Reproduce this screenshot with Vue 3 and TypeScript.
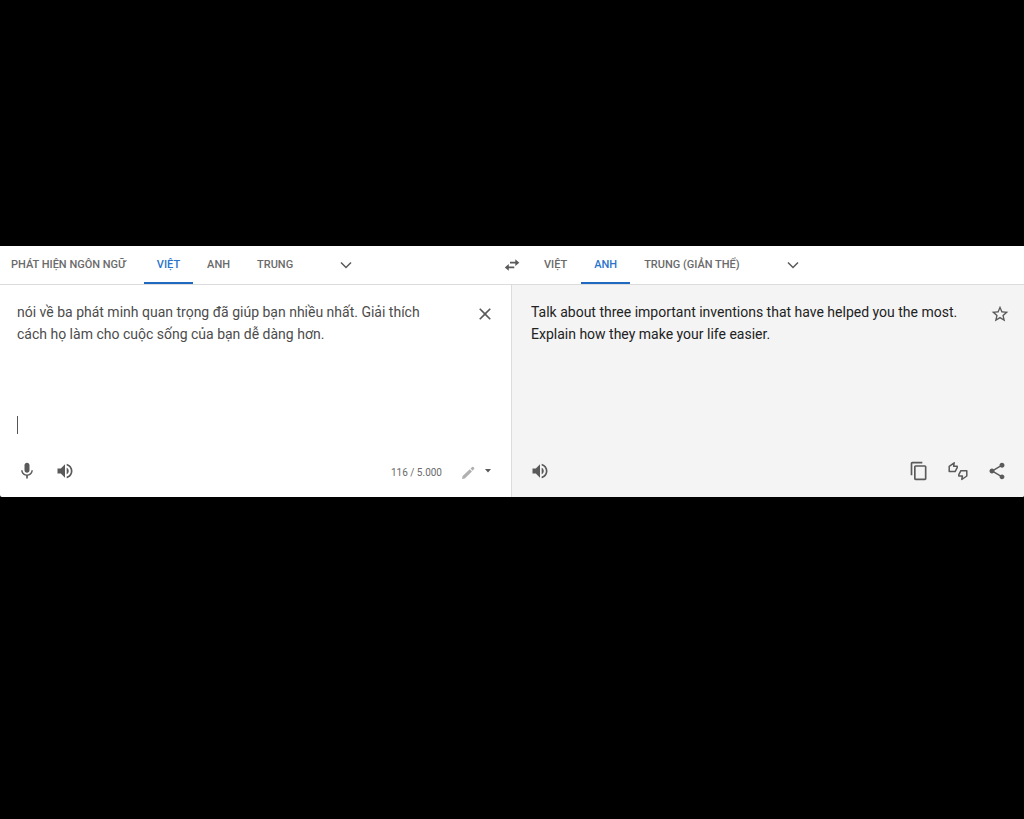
<script setup lang="ts">
import { ref } from 'vue'

interface Tab {
  label: string
  value: string
}

const sourceTabs: Tab[] = [
  { label: 'PHÁT HIỆN NGÔN NGỮ', value: 'auto' },
  { label: 'VIỆT', value: 'vi' },
  { label: 'ANH', value: 'en' },
  { label: 'TRUNG', value: 'zh' },
]
const targetTabs: Tab[] = [
  { label: 'VIỆT', value: 'vi' },
  { label: 'ANH', value: 'en' },
  { label: 'TRUNG (GIẢN THỂ)', value: 'zh-CN' },
]

const source = ref('vi')
const target = ref('en')
const text = ref(
  'nói về ba phát minh quan trọng đã giúp bạn nhiều nhất. Giải thích cách họ làm cho cuộc sống của bạn dễ dàng hơn.',
)
const translation =
  'Talk about three important inventions that have helped you the most. Explain how they make your life easier.'
</script>

<template>
  <main class="page">
    <section class="translator">
      <header class="languages">
        <nav class="tabs source-tabs">
          <button
            v-for="tab in sourceTabs"
            :key="tab.value"
            type="button"
            class="tab"
            :class="{ active: tab.value === source }"
            @click="source = tab.value"
          >{{ tab.label }}</button>
          <button type="button" class="icon-button more" aria-label="Ngôn ngữ khác">
            <svg class="chevron" viewBox="0 0 12 12"><path d="M1 3.500l5 5 5-5" /></svg>
          </button>
        </nav>
        <button type="button" class="icon-button swap" aria-label="Hoán đổi ngôn ngữ">
          <svg viewBox="0 0 20 20" class="icon">
            <path d="M8 6.800h5.300V4.300L17.300 7.700l-4 3.400V8.600H8zM12.300 11.500H6.800V9L2.800 12.400l4 3.400v-2.500h5.500z" />
          </svg>
        </button>
        <nav class="tabs">
          <button
            v-for="tab in targetTabs"
            :key="tab.value"
            type="button"
            class="tab"
            :class="{ active: tab.value === target }"
            @click="target = tab.value"
          >{{ tab.label }}</button>
          <button type="button" class="icon-button more" aria-label="Ngôn ngữ khác">
            <svg class="chevron" viewBox="0 0 12 12"><path d="M1 3.500l5 5 5-5" /></svg>
          </button>
        </nav>
      </header>

      <div class="panes">
        <div class="pane source">
          <div class="content">
            <div class="entry">
              <textarea v-model="text" class="text" aria-label="Văn bản gốc" spellcheck="false"></textarea>
              <span class="caret"></span>
            </div>
            <button type="button" class="icon-button" aria-label="Xóa" @click="text = ''">
              <svg viewBox="0 0 24 24" class="icon">
                <path d="M19 6.400L17.600 5 12 10.600 6.400 5 5 6.400l5.600 5.600L5 17.600 6.400 19l5.600-5.600 5.600 5.600 1.400-1.400-5.600-5.600z" />
              </svg>
            </button>
          </div>
          <footer class="actions">
            <button type="button" class="icon-button" aria-label="Nói">
              <svg viewBox="0 0 24 24" class="icon">
                <path d="M12 14c1.700 0 3-1.300 3-3V5c0-1.700-1.300-3-3-3S9 3.300 9 5v6c0 1.700 1.300 3 3 3zM17.300 11c0 3-2.500 5.100-5.300 5.100S6.700 14 6.700 11H5c0 3.400 2.700 6.200 6 6.700V21h2v-3.300c3.300-.5 6-3.300 6-6.700z" />
              </svg>
            </button>
            <button type="button" class="icon-button" aria-label="Nghe">
              <svg viewBox="0 0 24 24" class="icon">
                <path d="M3 9v6h4l5 5V4L7 9zM16.500 12c0-1.800-1-3.300-2.500-4v8c1.500-.7 2.500-2.200 2.500-4zM14 3.200v2.100c2.900.9 5 3.500 5 6.700s-2.100 5.800-5 6.700v2.100c4-.9 7-4.500 7-8.800s-3-7.900-7-8.800z" />
              </svg>
            </button>
            <span class="counter">116 / 5.000</span>
            <button type="button" class="keyboard" aria-label="Công cụ nhập">
              <svg viewBox="0 0 14 14" class="pencil">
                <path d="M1 13l.6-3L8.800 3.300l2.200 2.300L3.800 12.400zM9.500 2.600L11.200 1q.6-.5 1.200 0l.7.8q.5.6 0 1.200l-1.500 1.800z" />
              </svg>
              <svg viewBox="0 0 6 4" class="triangle"><path d="M0 0h6L3 3.500z" /></svg>
            </button>
          </footer>
        </div>

        <div class="pane result">
          <div class="content">
            <p class="text">{{ translation }}</p>
            <button type="button" class="icon-button" aria-label="Lưu bản dịch">
              <svg viewBox="0 0 24 24" class="icon">
                <path d="M22 9.240l-7.190-.62L12 2 9.190 8.630 2 9.240l5.460 4.730L5.820 21 12 17.270 18.180 21l-1.630-7.030L22 9.240zM12 15.400l-3.760 2.270 1-4.280-3.320-2.880 4.380-.38L12 6.100l1.710 4.040 4.380.38-3.320 2.880 1 4.280L12 15.400z" />
              </svg>
            </button>
          </div>
          <footer class="actions">
            <button type="button" class="icon-button listen" aria-label="Nghe bản dịch">
              <svg viewBox="0 0 24 24" class="icon">
                <path d="M3 9v6h4l5 5V4L7 9zM16.500 12c0-1.800-1-3.300-2.500-4v8c1.500-.7 2.500-2.200 2.500-4zM14 3.200v2.100c2.900.9 5 3.500 5 6.700s-2.100 5.800-5 6.700v2.100c4-.9 7-4.500 7-8.800s-3-7.900-7-8.800z" />
              </svg>
            </button>
            <button type="button" class="icon-button" aria-label="Sao chép">
              <svg viewBox="0 0 24 24" class="icon">
                <path d="M16 1H4c-1.100 0-2 .9-2 2v14h2V3h12V1zm3 4H8c-1.100 0-2 .9-2 2v14c0 1.100.9 2 2 2h11c1.100 0 2-.9 2-2V7c0-1.100-.9-2-2-2zm0 16H8V7h11v14z" />
              </svg>
            </button>
            <button type="button" class="icon-button" aria-label="Đánh giá">
              <svg viewBox="0 0 20 20" class="icon rate">
                <path d="M1.200 5.300v5.300h5.900l2.100-3.900V5.300H5.600l.6-3.500z" />
                <path d="M18.800 15V9.700h-5.900l-2.100 3.900V15h3.600l-.6 3.500z" />
              </svg>
            </button>
            <button type="button" class="icon-button" aria-label="Chia sẻ">
              <svg viewBox="0 0 24 24" class="icon">
                <path d="M18 16.080c-.76 0-1.440.3-1.960.77L8.910 12.700c.05-.23.09-.46.09-.7s-.04-.47-.09-.7l7.050-4.110c.54.5 1.250.81 2.040.81 1.660 0 3-1.340 3-3s-1.340-3-3-3-3 1.340-3 3c0 .24.04.47.09.7L8.040 9.810C7.500 9.310 6.790 9 6 9c-1.660 0-3 1.340-3 3s1.340 3 3 3c.79 0 1.500-.31 2.040-.81l7.120 4.160c-.05.21-.08.43-.08.65 0 1.610 1.310 2.920 2.920 2.920s2.920-1.310 2.920-2.920-1.310-2.920-2.920-2.920z" />
              </svg>
            </button>
          </footer>
        </div>
      </div>
    </section>
  </main>
</template>

<style>
body {
  margin: 0;
  background: #000;
}
</style>

<style scoped>
.page {
  box-sizing: border-box;
  min-height: 100vh;
  padding-top: 246px;
  background: #000;
  font-family: Roboto, "Noto Sans", sans-serif;
}
.translator {
  background: #fff;
  border-radius: 0 0 2px 2px;
  overflow: hidden;
}
button {
  margin: 0;
  padding: 0;
  border: 0;
  background: none;
  font: inherit;
  color: #5f6368;
}
svg {
  display: block;
}
.languages {
  display: grid;
  grid-template-columns: 1fr 38px 1fr;
  height: 38px;
  border-bottom: 1px solid #dcdcdc;
}
.tabs {
  display: flex;
  align-items: stretch;
  gap: 1px;
}
.tab {
  padding: 0 13px;
  border-top: 2px solid transparent;
  border-bottom: 2px solid transparent;
  font-size: 11px;
  font-weight: 500;
  line-height: 34px;
  color: #6a6a6a;
  white-space: nowrap;
}
.source-tabs .tab:first-child {
  padding: 0 17px 0 11px;
}
.tab.active {
  color: #2a74cc;
  border-bottom-color: #1f69c0;
}
.icon-button {
  display: flex;
  flex: none;
  align-items: center;
  justify-content: center;
  width: 38px;
  height: 38px;
}
.more {
  margin-left: 20px;
}
.icon {
  width: 20px;
  height: 20px;
  fill: #5a5a5a;
}
.chevron {
  width: 12px;
  height: 12px;
  fill: none;
  stroke: #5a5a5a;
  stroke-width: 1.5;
}
.panes {
  display: grid;
  grid-template-columns: 1fr 1fr;
}
.pane {
  display: flex;
  flex-direction: column;
  min-height: 212px;
}
.source {
  border-right: 1px solid #dcdcdc;
}
.result {
  background: #f4f4f4;
}
.content {
  display: flex;
  flex: 1;
  padding: 10px 7px 0 17px;
}
.result .content {
  padding: 10px 5px 0 19px;
}
.entry {
  position: relative;
  display: flex;
  flex: 1;
}
.text {
  display: block;
  flex: 1;
  min-width: 0;
  margin: 0;
  padding: 6px 20px 0 0;
  border: 0;
  outline: 0;
  resize: none;
  overflow: hidden;
  background: none;
  font: 400 14px/22px Roboto, "Noto Sans", sans-serif;
  color: #4c4c4c;
}
.result .text {
  padding-right: 0;
  color: #222;
}
.caret {
  position: absolute;
  left: 0;
  top: 121px;
  width: 1px;
  height: 18px;
  background: #555;
}
.actions {
  display: flex;
  align-items: center;
  height: 38px;
  padding: 0 8px 7px;
}
.result .actions {
  padding: 0 8px 7px 9px;
  gap: 1px;
}
.listen {
  margin-right: auto;
}
.counter {
  margin-left: auto;
  padding-top: 3px;
  font-size: 10px;
  line-height: 14px;
  color: #6a6a6a;
}
.keyboard {
  display: flex;
  align-items: center;
  gap: 10px;
  height: 38px;
  padding: 0 12px 0 19px;
}
.pencil {
  width: 14px;
  height: 14px;
  margin-top: 3px;
  fill: #b0b0b0;
}
.triangle {
  width: 6px;
  height: 4px;
  fill: #5a5a5a;
}
.rate {
  fill: none;
  stroke: #5a5a5a;
  stroke-width: 1.5;
  stroke-linejoin: round;
}
</style>
